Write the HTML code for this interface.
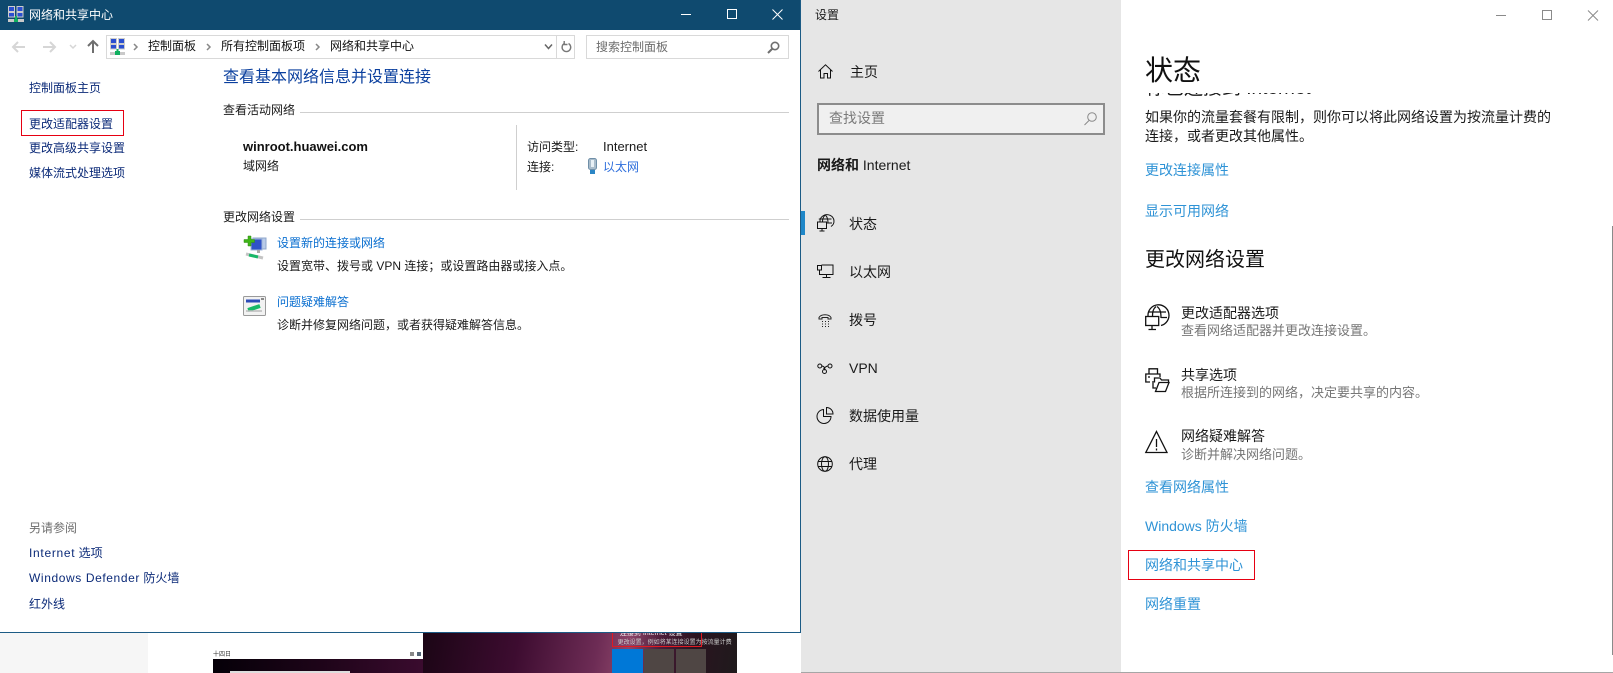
<!DOCTYPE html>
<html><head><meta charset="utf-8"><style>
html,body{margin:0;padding:0;width:1613px;height:673px;overflow:hidden;background:#fff}
body{position:relative;font-family:"Liberation Sans","Noto Sans CJK SC",sans-serif;font-size:12px;color:#000}
.a{position:absolute}
.t{position:absolute;white-space:nowrap;line-height:20px;height:20px}
.nv{color:#0b2a78}
.lk{color:#0a6fd0}
.s14{font-size:14px}
.bl{color:#2f93d6;font-size:14px}
.gr{color:#767676;font-size:13px}
svg{position:absolute;overflow:visible}
</style></head><body>

<!-- background below left window -->
<div class="a" style="left:0;top:632px;width:148px;height:41px;background:#f6f6f6"></div>
<div class="a" style="left:213px;top:659px;width:210px;height:14px;background:linear-gradient(90deg,#050008,#1d0418 50%,#3a0b2e)"></div>
<div class="a" style="left:423px;top:632px;width:314px;height:41px;background:linear-gradient(100deg,#1b0515 0%,#3d0c30 30%,#6d2c55 55%,#8b4468 65%,#4a1c38 75%,#2a1420 85%,#1f1a1c 100%)"></div>
<div class="a" style="left:230px;top:671px;width:120px;height:2px;background:#ddd"></div>
<div class="t" style="left:213px;top:645px;font-size:6px;color:#333">十四日</div>
<div class="a" style="left:410px;top:652px;width:4px;height:4px;background:#888"></div>
<div class="a" style="left:417px;top:652px;width:4px;height:4px;background:#567"></div>
<div class="a" style="left:612px;top:630px;width:90px;height:17px;border:1px solid #e01a22;box-sizing:border-box"></div>
<div class="t" style="left:616px;top:624px;font-size:7px;color:#eee">&nbsp;&nbsp;连接到 Internet 设置</div>
<div class="t" style="left:616px;top:633px;font-size:6px;color:#ccc">&nbsp;更改设置，例如将某连接设置为按流量计费</div>
<div class="a" style="left:612px;top:649px;width:31px;height:24px;background:#0078d7"></div>
<div class="a" style="left:644px;top:649px;width:30px;height:24px;background:#4f4644"></div>
<div class="a" style="left:676px;top:649px;width:30px;height:24px;background:#4f4644"></div>

<!-- LEFT WINDOW -->
<div class="a" style="left:0;top:0;width:801px;height:633px;background:#fff;border-right:1px solid #1c5b85;border-bottom:1px solid #1c5b85;box-sizing:border-box"></div>
<div class="a" style="left:0;top:0;width:800px;height:30px;background:#0f4a6f"></div>
<svg style="left:8px;top:6px" width="16" height="16" viewBox="0 0 16 16"><rect x="0.5" y="0.5" width="6" height="5" fill="#2a4fd0" stroke="#ccc"/><rect x="9" y="0.5" width="6" height="5" fill="#2a4fd0" stroke="#ccc"/><rect x="0.5" y="6.5" width="6" height="4.5" fill="#2a4fd0" stroke="#ccc"/><rect x="9" y="6.5" width="6" height="4.5" fill="#2a4fd0" stroke="#ccc"/><rect x="0" y="13" width="16" height="3" fill="#c9c9c9"/><rect x="6" y="13" width="4" height="3" fill="#10b060"/><rect x="7" y="10" width="2" height="3" fill="#10b060"/></svg>
<div class="t" style="left:29px;top:5px;color:#fff">网络和共享中心</div>
<svg style="left:681px;top:8px" width="120" height="16" fill="none" stroke="#fff" stroke-width="1"><path d="M0 6.5H10"/><rect x="46.5" y="1.5" width="9" height="9"/><path d="M91.5 1.5L101.5 11.500M101.5 1.500L91.500 11.500"/></svg>

<svg style="left:12px;top:38px" width="90" height="18" fill="none"><path d="M1 9H13M6 4L1 9L6 14" stroke="#d6d6d6" stroke-width="2"/><path d="M31 9H43M38 4L43 9L38 14" stroke="#d6d6d6" stroke-width="2"/><path d="M58 7L61 10L64 7" stroke="#d6d6d6" stroke-width="1.500"/><path d="M81 15V3M76 8L81 3L86 8" stroke="#6e6e6e" stroke-width="2"/></svg>
<div class="a" style="left:106px;top:35px;width:469px;height:24px;border:1px solid #d9d9d9;box-sizing:border-box"></div>
<svg style="left:110px;top:38px" width="15" height="17" viewBox="0 0 15 17"><rect x="0.500" y="0.500" width="6" height="5" fill="#2a4fd0" stroke="#ccc"/><rect x="8.500" y="0.500" width="6" height="5" fill="#2a4fd0" stroke="#ccc"/><rect x="0.500" y="6.500" width="6" height="4.500" fill="#2a4fd0" stroke="#ccc"/><rect x="8.500" y="6.500" width="6" height="4.500" fill="#2a4fd0" stroke="#ccc"/><rect x="0" y="14" width="15" height="3" fill="#c9c9c9"/><rect x="5" y="13" width="5" height="4" fill="#10b060"/><rect x="6.500" y="11" width="2" height="3" fill="#10b060"/></svg>
<svg style="left:133px;top:42px" width="195" height="10" fill="none" stroke="#888" stroke-width="1.500"><path d="M1 2L4 5L1 8M74 2L77 5L74 8M183 2L186 5L183 8"/></svg>
<div class="t" style="left:148px;top:36px;color:#111">控制面板</div>
<div class="t" style="left:221px;top:36px;color:#111">所有控制面板项</div>
<div class="t" style="left:330px;top:36px;color:#111">网络和共享中心</div>
<svg style="left:544px;top:43px" width="10" height="8" fill="none" stroke="#666" stroke-width="1.500"><path d="M1 1.500L4.500 5.500L8 1.500"/></svg>
<div class="a" style="left:556px;top:35px;width:1px;height:24px;background:#d9d9d9"></div>
<svg style="left:561px;top:41px" width="11" height="12" fill="none" stroke="#777" stroke-width="1.400"><path d="M7.500 2.500A4.300 4.300 0 1 1 3 2.700M3.200 0V3.500H6.500" /></svg>
<div class="a" style="left:586px;top:35px;width:203px;height:24px;border:1px solid #d9d9d9;box-sizing:border-box"></div>
<div class="t" style="left:596px;top:37px;color:#6d6d6d">搜索控制面板</div>
<svg style="left:767px;top:41px" width="13" height="13" fill="none" stroke="#6f6f6f" stroke-width="1.600"><circle cx="8" cy="5" r="3.700"/><path d="M5.500 7.500L1 12" stroke-width="2"/></svg>

<div class="t" style="left:223px;top:68px;font-size:16px;color:#0a3f9e">查看基本网络信息并设置连接</div>
<div class="t nv" style="left:29px;top:78px">控制面板主页</div>
<div class="a" style="left:21px;top:110px;width:103px;height:26px;border:1px solid #e60012;box-sizing:border-box"></div>
<div class="t nv" style="left:29px;top:114px">更改适配器设置</div>
<div class="t nv" style="left:29px;top:138px">更改高级共享设置</div>
<div class="t nv" style="left:29px;top:163px">媒体流式处理选项</div>

<div class="t" style="left:223px;top:100px;color:#1a1a1a">查看活动网络</div>
<div class="a" style="left:300px;top:112px;width:489px;height:1px;background:#cfcfcf"></div>
<div class="t" style="left:243px;top:137px;font-weight:bold;font-size:13px;color:#111">winroot.huawei.com</div>
<div class="t" style="left:243px;top:156px;color:#1a1a1a">域网络</div>
<div class="a" style="left:516px;top:125px;width:1px;height:65px;background:#cfcfcf"></div>
<div class="t" style="left:527px;top:137px;color:#1a1a1a">访问类型:</div>
<div class="t" style="left:603px;top:137px;font-size:13px;color:#1a1a1a">Internet</div>
<div class="t" style="left:527px;top:157px;color:#1a1a1a">连接:</div>
<svg style="left:588px;top:158px" width="9" height="16"><rect x="0.500" y="0.500" width="8" height="11" rx="2" fill="#a9bccb" stroke="#6f8fa8"/><rect x="3" y="2" width="3" height="7" fill="#e8f0f5"/><rect x="2" y="12" width="5" height="4" fill="#2b86c5"/></svg>
<div class="t" style="left:603px;top:157px;color:#2f6fdc">以太网</div>

<div class="t" style="left:223px;top:207px;color:#1a1a1a">更改网络设置</div>
<div class="a" style="left:300px;top:219px;width:489px;height:1px;background:#cfcfcf"></div>
<svg style="left:243px;top:236px" width="24" height="24" viewBox="0 0 24 24"><rect x="10" y="2" width="13" height="11" fill="#b9cbe8" stroke="#8fa7cc"/><rect x="8" y="3" width="11" height="11" fill="#2f52c8" stroke="#9fb4d8"/><rect x="14" y="14" width="3" height="3" fill="#aaa"/><path d="M3 18L20 22" stroke="#c4c4c4" stroke-width="3"/><path d="M6 19L15 21" stroke="#18b868" stroke-width="3"/><path d="M5 0H8V3.500H11.500V6.500H8V10H5V6.500H1V3.500H5Z" fill="#3fb518" stroke="#2d8a10" stroke-width=".5"/></svg>
<div class="t lk" style="left:277px;top:233px">设置新的连接或网络</div>
<div class="t" style="left:277px;top:256px;color:#1a1a1a">设置宽带、拨号或 VPN 连接；或设置路由器或接入点。</div>
<svg style="left:243px;top:296px" width="23" height="20" viewBox="0 0 23 20"><rect x="0.500" y="0.500" width="22" height="19" rx="1" fill="#f2f2f2" stroke="#9a9a9a"/><rect x="3" y="3.500" width="14" height="3" fill="#2b4bb8"/><rect x="18" y="2" width="3" height="2" fill="#8a8a8a"/><path d="M5 14L17 10" stroke="#18b868" stroke-width="4"/><path d="M3 15H19" stroke="#bbb" stroke-width="1.500"/></svg>
<div class="t lk" style="left:277px;top:292px">问题疑难解答</div>
<div class="t" style="left:277px;top:315px;color:#1a1a1a">诊断并修复网络问题，或者获得疑难解答信息。</div>

<div class="t" style="left:29px;top:518px;color:#6e6e6e">另请参阅</div>
<div class="t nv" style="left:29px;top:543px"><span style="letter-spacing:.7px">Internet</span> 选项</div>
<div class="t nv" style="left:29px;top:568px"><span style="letter-spacing:.6px">Windows Defender</span> 防火墙</div>
<div class="t nv" style="left:29px;top:594px">红外线</div>

<!-- RIGHT WINDOW -->
<div class="a" style="left:801px;top:0;width:812px;height:672px;background:#fff"></div>
<div class="a" style="left:801px;top:0;width:320px;height:672px;background:#e6e6e6"></div>
<div class="a" style="left:801px;top:672px;width:812px;height:1px;background:#a6a6a6"></div>
<div class="t" style="left:815px;top:5px;color:#1a1a1a">设置</div>

<svg style="left:818px;top:64px" width="16" height="15" fill="none" stroke="#111" stroke-width="1"><path d="M0.500 7.500L7.500 0.800L14.500 7.500M2.500 6V14H6V9.500H9.500V14H12.500V6"/></svg>
<div class="t s14" style="left:850px;top:62px;color:#1a1a1a">主页</div>
<div class="a" style="left:817px;top:103px;width:288px;height:32px;border:2px solid #8c8c8c;background:#f0f0f0;box-sizing:border-box"></div>
<div class="t s14" style="left:829px;top:108px;color:#7a7a7a">查找设置</div>
<svg style="left:1084px;top:112px" width="13" height="14" fill="none" stroke="#8a8a8a" stroke-width="1"><circle cx="8" cy="5" r="4.300"/><path d="M5 8.500L0.500 13"/></svg>
<div class="t s14" style="left:817px;top:155px;color:#1a1a1a"><b>网络和</b> <span style="font-size:14px;font-weight:normal">Internet</span></div>

<div class="a" style="left:801px;top:211px;width:4px;height:24px;background:#1f87c8"></div>
<svg style="left:817px;top:215px" width="17" height="17" fill="none" stroke="#111" stroke-width="1"><path d="M3 6.500A7 6.500 0 1 1 14 11.500"/><path d="M8 .2C6 2 5.500 4 5.500 6.500M8.500 .2C10.500 2 11 5 11 8M1.800 4H14.500M9 8H15"/><rect x="0.500" y="7" width="9" height="6.500" fill="#e6e6e6"/><path d="M5 13.500V15.500M2.500 16H7.500"/></svg>
<div class="t s14" style="left:849px;top:214px;color:#1a1a1a">状态</div>
<svg style="left:817px;top:264px" width="17" height="15" fill="none" stroke="#111" stroke-width="1"><path d="M4.500 1H16V10.500H2.500V6"/><rect x="0.500" y="1.500" width="4" height="4.500" fill="#e6e6e6"/><path d="M9.500 10.500V13.500M5.500 13.500H13.500"/></svg>
<div class="t s14" style="left:849px;top:262px;color:#1a1a1a">以太网</div>
<svg style="left:818px;top:313px" width="15" height="15" fill="none" stroke="#222" stroke-width="1"><path d="M1 6V4.500C3 .8 11 .8 13 4.500V6H10V4.500H4V6Z"/><path d="M4 8.500H5M7 8.500H8M10 8.500H11M4 11H5M7 11H8M10 11H11M4 13.500H5M7 13.500H8M10 13.500H11"/></svg>
<div class="t s14" style="left:849px;top:310px;color:#1a1a1a">拨号</div>
<svg style="left:817px;top:363px" width="16" height="11" fill="none" stroke="#111" stroke-width="1"><circle cx="2.800" cy="3" r="2"/><circle cx="13" cy="3" r="2"/><circle cx="7.500" cy="8.500" r="2"/><path d="M4.800 3C7 3 9 6 7 7M11 3C9 3 7.500 5 6.500 6"/></svg>
<div class="t s14" style="left:849px;top:358px;color:#1a1a1a">VPN</div>
<svg style="left:817px;top:407px" width="17" height="17" fill="none" stroke="#111" stroke-width="1"><path d="M6.500 2.500A7 7 0 1 0 14 9.500H6.500Z"/><path d="M9.500 .5A6.500 6.500 0 0 1 16 7H9.500Z"/></svg>
<div class="t s14" style="left:849px;top:406px;color:#1a1a1a">数据使用量</div>
<svg style="left:817px;top:456px" width="16" height="16" fill="none" stroke="#111" stroke-width="1"><circle cx="8" cy="8" r="7.300"/><ellipse cx="8" cy="8" rx="3.500" ry="7.300"/><path d="M1.500 5.500H14.500M1.500 10.500H14.500"/></svg>
<div class="t s14" style="left:849px;top:454px;color:#1a1a1a">代理</div>

<svg style="left:1496px;top:10px" width="104" height="11" fill="none" stroke="#8a8a8a" stroke-width="1"><path d="M0 5.500H10"/><rect x="46.500" y="0.500" width="9" height="9"/><path d="M92 0.500L102 10.500M102 .5L92 10.500"/></svg>

<div class="t" style="left:1145px;top:56px;font-size:28px;line-height:30px;height:30px;color:#111">状态</div>
<div class="a" style="left:1145px;top:93px;width:400px;height:6px;overflow:hidden"><div class="t" style="left:1px;top:-14px;font-size:19px;color:#1a1a1a">你已连接到 Internet</div></div>
<div class="t s14" style="left:1145px;top:107px;color:#1a1a1a">如果你的流量套餐有限制，则你可以将此网络设置为按流量计费的</div>
<div class="t s14" style="left:1145px;top:126px;color:#1a1a1a">连接，或者更改其他属性。</div>
<div class="t bl" style="left:1145px;top:160px">更改连接属性</div>
<div class="t bl" style="left:1145px;top:201px">显示可用网络</div>
<div class="t" style="left:1145px;top:250px;font-size:20px;line-height:20px;color:#111">更改网络设置</div>

<svg style="left:1145px;top:306px" width="23" height="25" fill="none" stroke="#111" stroke-width="1.300"><path d="M3 10A10.500 10.500 0 1 1 16 19.500"/><path d="M11 .5C8 3 7.500 6 7.500 10M12 .5C15.500 3 16 7 16 12M3 6H21M16 11.500H22"/><rect x="0.700" y="10.500" width="13" height="9" fill="#fff"/><path d="M7 19.500V23M3.500 23.500H11"/></svg>
<div class="t s14" style="left:1181px;top:303px;color:#1a1a1a">更改适配器选项</div>
<div class="t gr" style="left:1181px;top:321px">查看网络适配器并更改连接设置。</div>
<svg style="left:1145px;top:368px" width="25" height="25" fill="none" stroke="#111" stroke-width="1.300"><path d="M4 6V.8H12.500V6"/><path d="M5 14H.8V6H15V9"/><path d="M3 9H5"/><path d="M8 13V20H11"/><path d="M9.500 14.500V10H15L16.500 12H23.500V14"/><path d="M10.500 23.500L14 14.500H24L20.500 23.500Z" fill="#fff"/></svg>
<div class="t s14" style="left:1181px;top:365px;color:#1a1a1a">共享选项</div>
<div class="t gr" style="left:1181px;top:383px">根据所连接到的网络，决定要共享的内容。</div>
<svg style="left:1145px;top:430px" width="23" height="24" fill="none" stroke="#111" stroke-width="1.300"><path d="M11.500 1.500L22 22.500H.8Z"/><path d="M11.500 9V17M11.500 18.500V20.500"/></svg>
<div class="t s14" style="left:1181px;top:426px;color:#1a1a1a">网络疑难解答</div>
<div class="t gr" style="left:1181px;top:445px">诊断并解决网络问题。</div>

<div class="t bl" style="left:1145px;top:477px">查看网络属性</div>
<div class="t bl" style="left:1145px;top:516px">Windows 防火墙</div>
<div class="a" style="left:1128px;top:550px;width:127px;height:30px;border:1px solid #e60012;box-sizing:border-box"></div>
<div class="t bl" style="left:1145px;top:555px">网络和共享中心</div>
<div class="t bl" style="left:1145px;top:594px">网络重置</div>
<div class="a" style="left:1612px;top:226px;width:1px;height:429px;background:#8a8a8a"></div>
</body></html>
